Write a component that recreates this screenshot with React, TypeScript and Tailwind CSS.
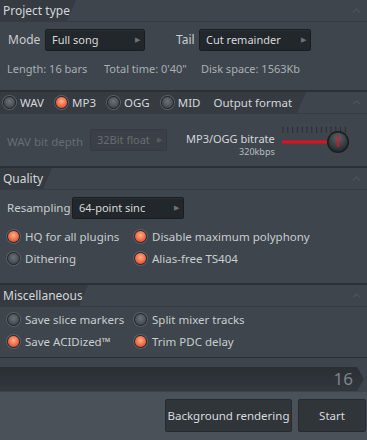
import { ChevronUp } from 'lucide-react'

const font = { fontFamily: '"Noto Sans", "Open Sans", sans-serif' }

function Led({ on }: { on: boolean }) {
  return (
    <span
      className={
        'inline-block w-[13px] h-[13px] rounded-full border shrink-0 ' +
        (on
          ? 'border-[#2a2d30] bg-[radial-gradient(circle_at_50%_40%,#ffb08a_0%,#f06a45_55%,#a83a22_100%)] shadow-[0_0_0_1px_#5a6068]'
          : 'border-[#23272b] bg-[radial-gradient(circle_at_50%_40%,#6a7177_0%,#4a5056_60%,#33383d_100%)] shadow-[0_0_0_1px_#5a6068]')
      }
    />
  )
}

function Check({ on, label }: { on: boolean; label: string }) {
  return (
    <div className="flex items-center gap-[5px] whitespace-nowrap">
      <Led on={on} />
      <span className="text-[#c9cdd1]">{label}</span>
    </div>
  )
}

function Dropdown({ text, w, disabled }: { text: string; w: string; disabled?: boolean }) {
  return (
    <div
      className={
        'h-[22px] flex items-center justify-between pl-[6px] pr-[4px] rounded-[2px] border whitespace-nowrap ' +
        w +
        (disabled
          ? ' bg-[#3a4046] border-[#353a40] text-[#666c72]'
          : ' bg-[#22272b] border-[#1a1e22] text-[#d6d9dc] shadow-[inset_0_1px_0_#2c3136]')
      }
    >
      <span>{text}</span>
      <span className={'text-[7px] ' + (disabled ? 'text-[#555b61]' : 'text-[#6d737a]')}>▶</span>
    </div>
  )
}

function Header({ tabW, children }: { tabW: string; children: React.ReactNode }) {
  return (
    <div className="h-[22px] shrink-0 flex items-stretch border-b border-[#363c42] whitespace-nowrap">
      <div
        className={
          'flex items-center gap-[4px] pl-[3px] bg-[#353b41] [clip-path:polygon(0_0,100%_0,calc(100%-9px)_100%,0_100%)] ' +
          tabW
        }
      >
        {children}
      </div>
      <div className="flex-1" />
      <div className="w-[22px] flex items-center justify-center">
        <ChevronUp size={13} strokeWidth={1.5} className="text-[#5b6168]" />
      </div>
    </div>
  )
}

function FormatRadio({ on, label }: { on: boolean; label: string }) {
  return (
    <div className="flex items-center gap-[4px] mr-[7px]">
      <Led on={on} />
      <span className="text-[11.5px] text-[#d3d7db]">{label}</span>
    </div>
  )
}

export default function App() {
  return (
    <div className="w-[367px] h-[440px] bg-[#4a5159] text-[11px] overflow-hidden flex flex-col" style={font}>
      {/* Project type */}
      <div className="h-[92px] shrink-0 bg-[#3e454c] border-b-2 border-[#2b3035] flex flex-col">
        <Header tabW="w-[76px]">
          <span className="text-[12px] text-[#d3d7db]">Project type</span>
        </Header>
        <div className="flex items-center h-[24px] mt-[6px] pl-[8px] whitespace-nowrap">
          <span className="text-[#c9cdd1] text-[12px] w-[37px]">Mode</span>
          <Dropdown text="Full song" w="w-[100px]" />
          <span className="text-[#c9cdd1] text-[12px] ml-[31px] w-[23px]">Tail</span>
          <Dropdown text="Cut remainder" w="w-[112px]" />
        </div>
        <div className="flex items-center pl-[7px] mt-[9px] text-[11px] text-[#a9afb5] whitespace-nowrap">
          <span className="w-[97px]">Length: 16 bars</span>
          <span className="w-[97px]">Total time: 0'40"</span>
          <span>Disk space: 1563Kb</span>
        </div>
      </div>

      {/* Output format */}
      <div className="h-[76px] shrink-0 bg-[#3e454c] border-b-2 border-[#2b3035] flex flex-col">
        <Header tabW="w-[306px]">
          <FormatRadio on={false} label="WAV" />
          <FormatRadio on label="MP3" />
          <FormatRadio on={false} label="OGG" />
          <FormatRadio on={false} label="MID" />
          <span className="text-[11.5px] text-[#d3d7db] ml-[2px]">Output format</span>
        </Header>
        <div className="flex items-center flex-1 pl-[7px] pr-[8px] whitespace-nowrap">
          <span className="text-[#676d73] text-[11.5px] w-[83px] mt-[3px]">WAV bit depth</span>
          <Dropdown text="32Bit float" w="w-[77px]" disabled />
          <div className="ml-[19px] flex flex-col items-end leading-none mt-[8px]">
            <span className="text-[#d3d7db] text-[11px]">MP3/OGG bitrate</span>
            <span className="text-[#b9bec3] text-[9px] mt-[3px]">320kbps</span>
          </div>
          <svg width="72" height="34" viewBox="0 0 72 34" className="ml-[6px] mb-[2px]">
            {Array.from({ length: 14 }).map((_, i) => (
              <line key={i} x1={2 + i * 4.8} y1={4} x2={2 + i * 4.8} y2={11} stroke="#2b3035" strokeWidth="1" />
            ))}
            <line x1="1" y1="4" x2="66" y2="4" stroke="#4a5158" strokeWidth="0.5" />
            <line x1="1" y1="20" x2="50" y2="20" stroke="#e0101c" strokeWidth="3" />
            <circle cx="57" cy="20" r="11" fill="#1a1d20" />
            <circle cx="57" cy="20" r="9.5" fill="url(#kg)" />
            <line x1="57" y1="13" x2="57" y2="25" stroke="#e0141e" strokeWidth="1.6" />
            <defs>
              <radialGradient id="kg" cx="50%" cy="30%" r="70%">
                <stop offset="0%" stopColor="#5c6268" />
                <stop offset="100%" stopColor="#25292d" />
              </radialGradient>
            </defs>
          </svg>
        </div>
      </div>

      {/* Quality */}
      <div className="h-[117px] shrink-0 bg-[#3e454c] border-b-2 border-[#2b3035] flex flex-col">
        <Header tabW="w-[52px]">
          <span className="text-[12px] text-[#d3d7db]">Quality</span>
        </Header>
        <div className="flex items-center pl-[7px] mt-[7px] whitespace-nowrap">
          <span className="text-[#c9cdd1] text-[11.5px] w-[65px]">Resampling</span>
          <Dropdown text="64-point sinc" w="w-[112px]" />
        </div>
        <div className="grid grid-cols-[127px_1fr] gap-y-[5px] pl-[7px] mt-[9px] text-[11.5px]">
          <Check on label="HQ for all plugins" />
          <Check on label="Disable maximum polyphony" />
          <Check on={false} label="Dithering" />
          <Check on label="Alias-free TS404" />
        </div>
      </div>

      {/* Miscellaneous */}
      <div className="h-[73px] shrink-0 bg-[#3e454c] border-b border-[#2b3035] flex flex-col">
        <Header tabW="w-[88px]">
          <span className="text-[12px] text-[#d3d7db]">Miscellaneous</span>
        </Header>
        <div className="grid grid-cols-[127px_1fr] gap-y-[5px] pl-[7px] mt-[4px] text-[11.5px]">
          <Check on={false} label="Save slice markers" />
          <Check on={false} label="Split mixer tracks" />
          <Check on label="Save ACIDized™" />
          <Check on label="Trim PDC delay" />
        </div>
      </div>

      {/* Progress */}
      <div className="bg-[#3e454c] pt-[9px] pb-[1px] shrink-0">
        <div className="h-[24px] w-[364px] bg-[linear-gradient(#2a2f34,#33383e)] [clip-path:polygon(0_0,calc(100%-7px)_0,100%_50%,calc(100%-7px)_100%,0_100%)] flex items-center justify-end pr-[11px]">
          <span className="text-[17px] text-[#7d848a]">16</span>
        </div>
      </div>

      {/* Buttons */}
      <div className="flex-1 bg-[#4a5159] flex justify-end gap-[6px] pr-[1px] pt-[7px]">
        <button className="w-[127px] h-[33px] rounded-[2px] bg-[#30353a] border border-[#272b2f] text-[#d8dbde] text-[11.5px] whitespace-nowrap">
          Background rendering
        </button>
        <button className="w-[68px] h-[33px] rounded-[2px] bg-[#30353a] border border-[#272b2f] text-[#d8dbde] text-[11.5px]">
          Start
        </button>
      </div>
    </div>
  )
}
